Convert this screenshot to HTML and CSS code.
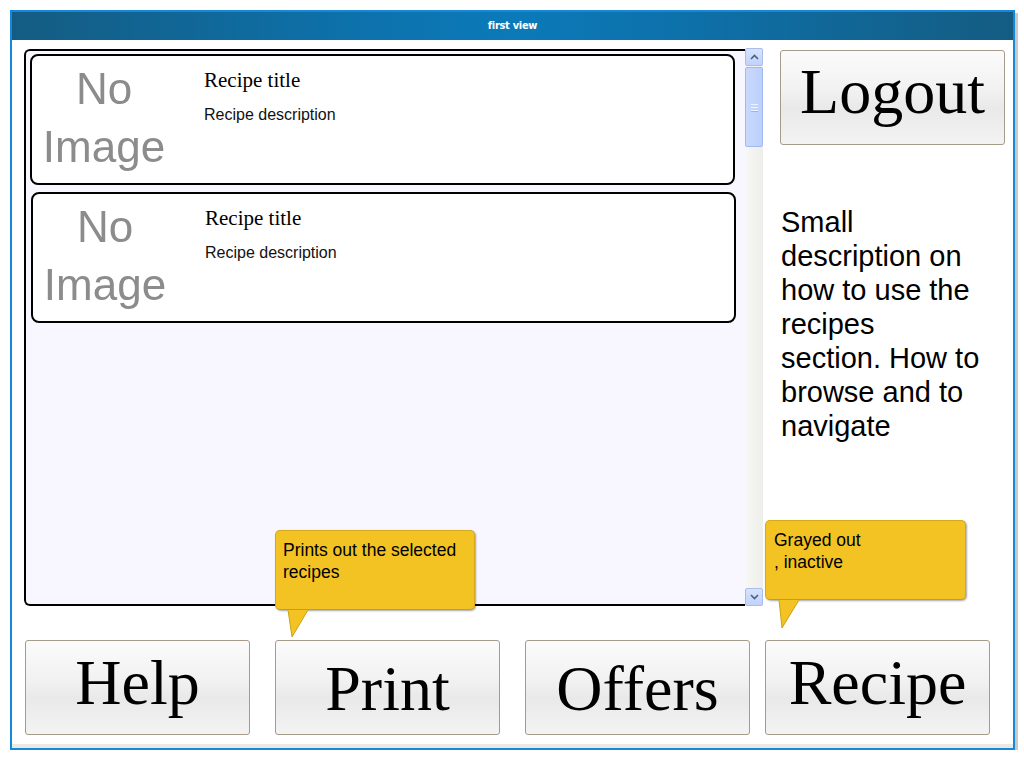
FILE: index.html
```html
<!DOCTYPE html>
<html lang="en">
<head>
<meta charset="utf-8">
<title>first view</title>
<link rel="stylesheet" href="styles.css">
</head>
<body>
<div class="window">
  <div class="titlebar">first view</div>
  <div class="content">
    <div class="main">
      <div class="listwrap">
        <div class="list">
          <div class="card">
            <div class="noimg"><span>No</span><span>Image</span></div>
            <div class="info">
              <div class="rtitle">Recipe title</div>
              <div class="rdesc">Recipe description</div>
            </div>
          </div>
          <div class="card card-second">
            <div class="noimg"><span>No</span><span>Image</span></div>
            <div class="info">
              <div class="rtitle">Recipe title</div>
              <div class="rdesc">Recipe description</div>
            </div>
          </div>
        </div>
        <div class="scrollbar">
          <div class="sb-btn">
            <svg width="9" height="6" viewBox="0 0 9 6"><path d="M1 5 L4.5 1.5 L8 5" fill="none" stroke="#4a5f86" stroke-width="1.6"/></svg>
          </div>
          <div class="sb-thumb">
            <span class="grip"></span>
          </div>
          <div class="sb-track"></div>
          <div class="sb-btn">
            <svg width="9" height="6" viewBox="0 0 9 6"><path d="M1 1 L4.5 4.5 L8 1" fill="none" stroke="#4a5f86" stroke-width="1.6"/></svg>
          </div>
        </div>
      </div>
      <div class="side">
        <div class="btn btn-logout">Logout</div>
        <p class="help-text">Small description on how to use the recipes section. How to browse and to navigate</p>
      </div>
    </div>
    <div class="buttons">
      <div class="btn btn-help">Help</div>
      <div class="btn btn-print">Print</div>
      <div class="btn btn-offers">Offers</div>
      <div class="btn btn-recipe">Recipe</div>
    </div>
  </div>
  <div class="bottomstrip"></div>

  <div class="tip tip-print">
    Prints out the selected recipes
    <svg class="tail" width="26" height="30" viewBox="0 0 26 30"><path d="M1 0 L5 27 L21 0" fill="#f2c322" stroke="#c9a21c" stroke-width="1"/><path d="M1.5 0 L20.5 0" stroke="#f2c322" stroke-width="2"/></svg>
  </div>
  <div class="tip tip-recipe">
    Grayed out<br>, inactive
    <svg class="tail" width="26" height="30" viewBox="0 0 26 30"><path d="M1 0 L4 28 L21 0" fill="#f2c322" stroke="#c9a21c" stroke-width="1"/><path d="M1.5 0 L20.5 0" stroke="#f2c322" stroke-width="2"/></svg>
  </div>
</div>
</body>
</html>
```

FILE: styles.css
```css
* { box-sizing: border-box; }

html, body {
  margin: 0;
  padding: 0;
  background: #ffffff;
}

body {
  padding: 10px 0 0 10px;
  font-family: "Liberation Sans", Arial, sans-serif;
}

.window {
  position: relative;
  width: 1005px;
  height: 740px;
  border: 2px solid #1588db;
  background: #ffffff;
  box-shadow: 3px 3px 0 #c9c9c9;
  display: flex;
  flex-direction: column;
}

.titlebar {
  height: 28px;
  flex: none;
  background: linear-gradient(to right, #145c82 0%, #0d72ac 35%, #0b7ab9 50%, #0d72ac 65%, #145c82 100%);
  color: #ffffff;
  font-family: "DejaVu Sans Condensed", "Liberation Sans Narrow", "Liberation Sans", sans-serif;
  font-weight: bold;
  font-size: 11px;
  line-height: 28px;
  text-align: center;
  letter-spacing: -0.3px;
}

.content {
  flex: 1;
  padding: 9px 8px 0 12px;
  display: flex;
  flex-direction: column;
}

.main {
  display: flex;
  gap: 17px;
  height: 557px;
}

.listwrap {
  width: 739px;
  flex: none;
  display: flex;
}

.list {
  flex: 1;
  border: 2px solid #000000;
  border-right: none;
  border-radius: 6px 0 0 6px;
  background: #f8f7ff;
  padding: 3px 10px 0 4px;
}

.card {
  height: 131px;
  border: 2px solid #000000;
  border-radius: 8px;
  background: #ffffff;
  display: flex;
}

.card-second {
  margin-top: 7px;
  margin-left: 1px;
  margin-right: -1px;
}

.noimg {
  width: 144px;
  margin-top: 4px;
  display: flex;
  flex-direction: column;
  align-items: center;
  font-family: "Liberation Sans", Arial, sans-serif;
  font-size: 44px;
  line-height: 58px;
  color: #8c8c8c;
  filter: blur(0.7px);
}

.info {
  margin-left: 28px;
  padding-top: 12px;
}

.rtitle {
  font-family: "Liberation Serif", "Times New Roman", serif;
  font-size: 21px;
  line-height: 24px;
  color: #000000;
}

.rdesc {
  margin-top: 13px;
  font-family: "Liberation Sans", Arial, sans-serif;
  font-size: 16px;
  line-height: 20px;
  color: #111111;
}

.scrollbar {
  width: 18px;
  margin-top: -1px;
  display: flex;
  flex-direction: column;
  background: linear-gradient(to right, #f7f7f5, #eeeeea);
}

.sb-btn {
  height: 18px;
  flex: none;
  border: 1px solid #a9bdf0;
  border-radius: 2px;
  background: linear-gradient(to bottom, #d7e3fd, #c1d3fb);
  display: flex;
  align-items: center;
  justify-content: center;
}

.sb-thumb {
  height: 80px;
  flex: none;
  margin-top: 1px;
  border: 1px solid #a3b8ee;
  border-radius: 2px;
  background: linear-gradient(to right, #cad9fd, #bcd0fb);
  display: flex;
  align-items: center;
  justify-content: center;
}

.grip {
  width: 7px;
  height: 7px;
  border-top: 1px solid #eef3ff;
  border-bottom: 1px solid #eef3ff;
  background: linear-gradient(to bottom, transparent 2px, #eef3ff 2px, #eef3ff 3px, transparent 3px);
  box-shadow: 0 1px 0 #9db2e4;
}

.sb-track {
  flex: 1;
}

.side {
  width: 225px;
  flex: none;
}

.btn {
  border: 1px solid #a69a8b;
  border-radius: 3px;
  background: linear-gradient(to bottom, #fbfbfb 0%, #f2f2f2 40%, #e9e9e9 62%, #f3f3f3 100%);
  font-family: "Liberation Serif", "Times New Roman", serif;
  font-size: 64px;
  color: #000000;
  height: 95px;
  width: 225px;
  flex: none;
  display: flex;
  align-items: center;
  justify-content: center;
}

.btn-logout {
  margin-top: 1px;
  padding-bottom: 12px;
}

.help-text {
  margin: 60px 0 0 1px;
  width: 200px;
  font-family: "Liberation Sans", Arial, sans-serif;
  font-size: 29px;
  line-height: 34px;
  color: #000000;
}

.buttons {
  margin-top: 34px;
  margin-left: 1px;
  display: flex;
  gap: 25px;
}

.btn-help { padding-bottom: 10px; }
.btn-print { padding-top: 2px; }
.btn-offers { padding-top: 2px; }
.btn-recipe { margin-left: -10px; padding-bottom: 10px; }

.bottomstrip {
  height: 4px;
  flex: none;
  background: #ebe9e3;
}

.tip {
  position: absolute;
  width: 200px;
  height: 80px;
  background: #f2c322;
  border: 1px solid #d4a91d;
  border-bottom-color: #c79c17;
  border-radius: 5px;
  box-shadow: 1px 1px 2px rgba(0, 0, 0, 0.35);
  padding: 8px 8px 0 7px;
  font-family: "Liberation Sans", Arial, sans-serif;
  font-size: 17.5px;
  line-height: 22px;
  color: #000000;
}

.tip-print {
  left: 263px;
  top: 518px;
}

.tip-recipe {
  left: 753px;
  top: 508px;
  width: 201px;
  padding-left: 8px;
}

.tail {
  position: absolute;
  left: 11px;
  top: 79px;
}

.tip-recipe .tail {
  left: 12px;
}
```
